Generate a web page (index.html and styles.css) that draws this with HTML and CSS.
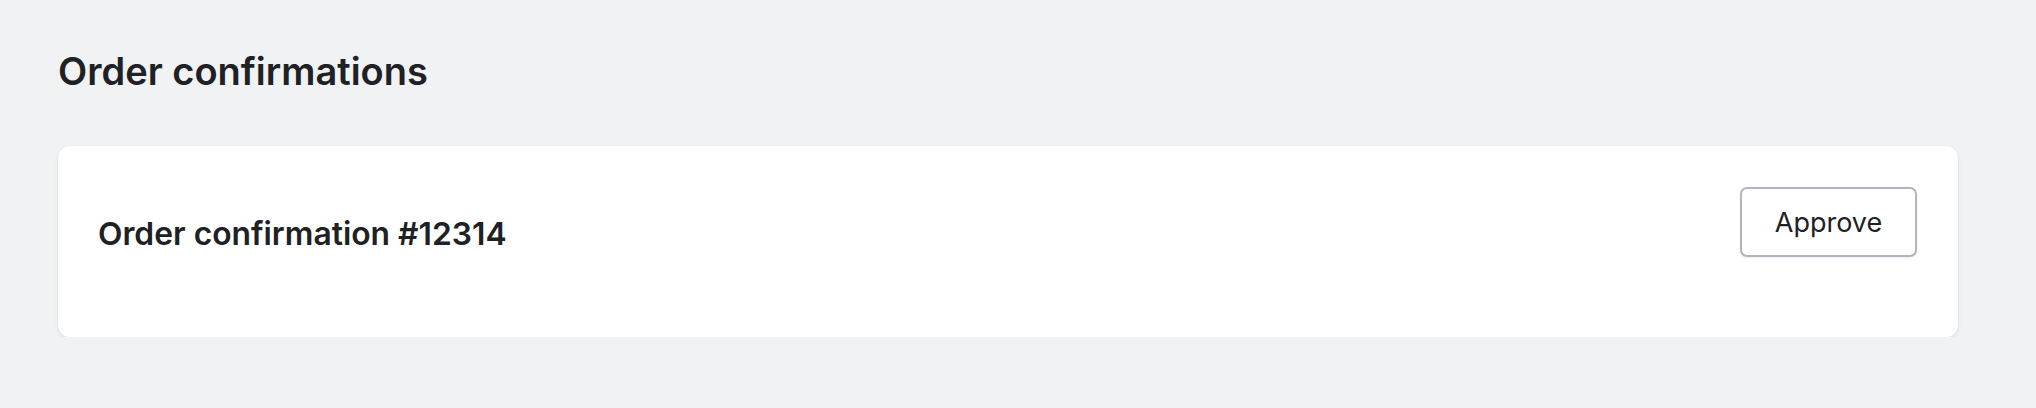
FILE: index.html
```html
<!DOCTYPE html>
<html lang="en">
<head>
  <meta charset="UTF-8" />
  <meta name="viewport" content="width=device-width, initial-scale=1.0"/>
  <title>Order confirmations</title>
  <link rel="stylesheet" href="styles.css">
</head>
<body>
  <div class="page">
    <h1>Order confirmations</h1>

    <div class="card">
      <h2 class="card-title">Order confirmation #12314</h2>
      <button class="btn">Approve</button>
    </div>
  </div>
</body>
</html>
```

FILE: styles.css
```css
body {
  font-family: Inter, "Noto Sans", Arial, sans-serif;
  background: #f1f2f4;
  color: #202124;
  margin: 0;
}

.page {
  padding: 48px 78px 0 58px;
}

h1 {
  font-size: 38px;
  font-weight: 600;
  line-height: 46px;
  margin: 0 0 52px 0;
}

.card {
  display: flex;
  justify-content: space-between;
  align-items: center;
  background: #fff;
  border-radius: 12px;
  padding: 41px 41px 58px 40px;
  height: 191px;
  box-sizing: border-box;
  box-shadow: 0 2px 4px rgba(0,0,0,0.07), 0 0 2px rgba(0,0,0,0.06);
}

.card-title {
  font-size: 31.8px;
  font-weight: 600;
  margin: 0;
}

.btn {
  align-self: flex-start;
  width: 177px;
  height: 70px;
  font-family: inherit;
  font-size: 27px;
  color: #202124;
  background: #fff;
  border: 2px solid #b1b5bf;
  border-radius: 7px;
  box-shadow: 0 1px 2px rgba(0,0,0,0.08);
  cursor: pointer;
}
```
